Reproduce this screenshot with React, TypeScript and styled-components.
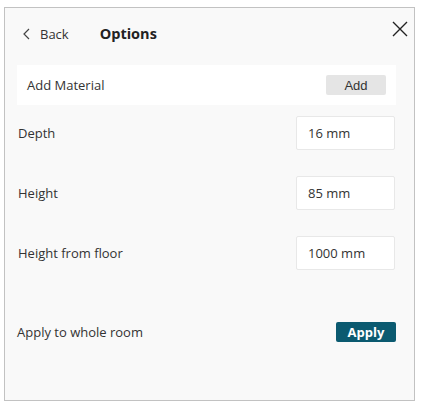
import styled, { createGlobalStyle } from 'styled-components'

const GlobalStyle = createGlobalStyle`
	body {
		margin: 0;
		background: #ffffff;
		font-family: 'Open Sans', 'Noto Sans', sans-serif;
		color: #333333;
	}
`

const fields = [
	{ label: 'Depth', value: '16 mm' },
	{ label: 'Height', value: '85 mm' },
	{ label: 'Height from floor', value: '1000 mm' },
]

export default function App() {
	return (
		<>
			<GlobalStyle />
			<Page>
				<Panel>
					<Header>
						<BackButton>
							<svg width='9' height='12' viewBox='0 0 9 12'>
								<path d='M7 1 L2 6 L7 11' fill='none' stroke='#444' strokeWidth='1.2' />
							</svg>
							<span>Back</span>
						</BackButton>
						<Title>Options</Title>
						<CloseButton aria-label='Close'>
							<svg width='16' height='16' viewBox='0 0 16 16'>
								<path d='M1 1 L15 15 M15 1 L1 15' stroke='#222' strokeWidth='1.4' />
							</svg>
						</CloseButton>
					</Header>
					<MaterialRow>
						<span>Add Material</span>
						<GreyButton>Add</GreyButton>
					</MaterialRow>
					<Fields>
						{fields.map((f) => (
							<FieldRow key={f.label}>
								<span>{f.label}</span>
								<ValueBox>{f.value}</ValueBox>
							</FieldRow>
						))}
					</Fields>
					<ApplyRow>
						<span>Apply to whole room</span>
						<PrimaryButton>Apply</PrimaryButton>
					</ApplyRow>
				</Panel>
			</Page>
		</>
	)
}

const Page = styled.div`
	padding: 7px 0 0 4px;
`

const Panel = styled.div`
	box-sizing: border-box;
	width: 411px;
	height: 394px;
	border: 1px solid #c2c2c2;
	background: #f9f9f9;
	display: flex;
	flex-direction: column;
	padding: 0 18px 0 12px;
	font-size: 13px;
`

const Header = styled.div`
	box-sizing: border-box;
	height: 57px;
	display: flex;
	align-items: center;
	padding: 0 0 6px 5px;
`

const BackButton = styled.div`
	display: flex;
	align-items: center;
	gap: 9px;
	font-size: 13px;
	color: #333;
`

const Title = styled.div`
	margin-left: 31px;
	font-weight: 700;
	font-size: 14.5px;
	color: #222;
`

const CloseButton = styled.div`
	margin-left: auto;
	margin-right: -12px;
	margin-top: -10px;
	display: flex;
`

const MaterialRow = styled.div`
	height: 40px;
	background: #ffffff;
	display: flex;
	align-items: center;
	justify-content: space-between;
	padding: 0 10px;
`

const GreyButton = styled.div`
	width: 60px;
	height: 20px;
	background: #e5e5e5;
	border-radius: 2px;
	display: flex;
	align-items: center;
	justify-content: center;
	font-family: 'Liberation Sans', Arial, sans-serif;
	font-size: 13px;
	color: #333;
`

const Fields = styled.div`
	margin-top: 11px;
	display: flex;
	flex-direction: column;
	gap: 26px;
`

const FieldRow = styled.div`
	height: 34px;
	display: flex;
	align-items: center;
	justify-content: space-between;
	padding: 0 1px;
`

const ValueBox = styled.div`
	box-sizing: border-box;
	width: 99px;
	height: 34px;
	background: #ffffff;
	border: 1px solid #e8e8e8;
	border-radius: 2px;
	display: flex;
	align-items: center;
	padding-left: 11px;
	color: #333;
`

const ApplyRow = styled.div`
	margin-top: 52px;
	height: 20px;
	display: flex;
	align-items: center;
	justify-content: space-between;
`

const PrimaryButton = styled.div`
	width: 60px;
	height: 20px;
	background: #0b5a70;
	border-radius: 2px;
	display: flex;
	align-items: center;
	justify-content: center;
	color: #ffffff;
	font-weight: 700;
	font-size: 13px;
`
